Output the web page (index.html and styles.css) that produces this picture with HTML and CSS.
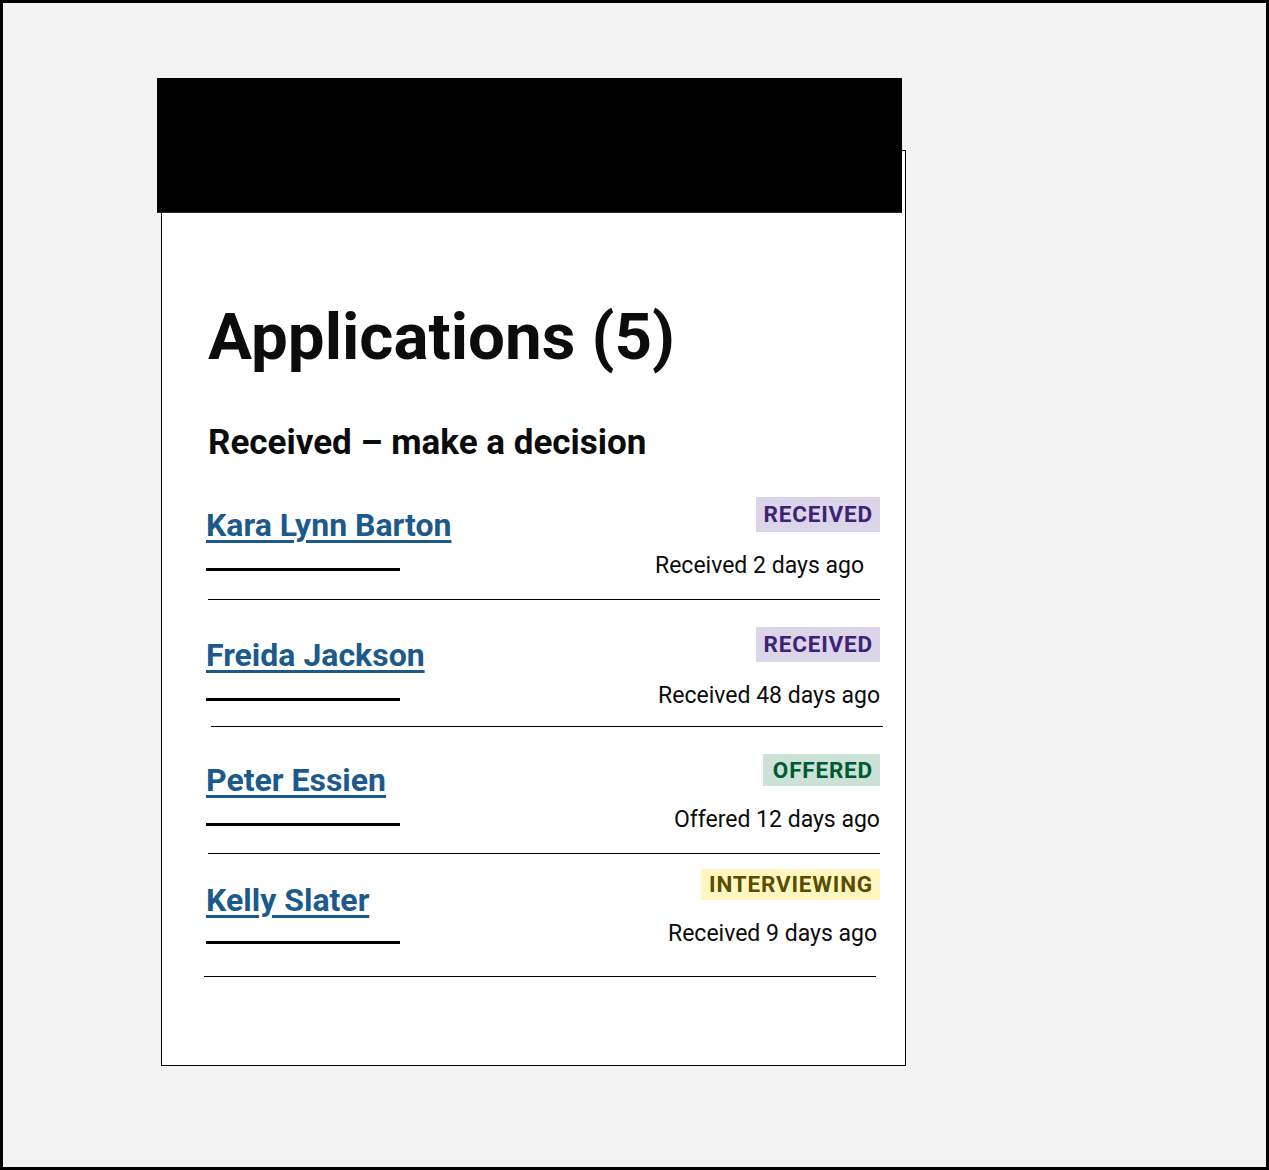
FILE: index.html
```html
<!DOCTYPE html>
<html lang="en">
<head>
<meta charset="utf-8">
<title>Applications</title>
<link rel="stylesheet" href="styles.css">
</head>
<body>
<div class="frame">
  <div class="masthead"></div>
  <main class="card">
    <h1 class="title">Applications (5)</h1>
    <h2 class="subtitle">Received – make a decision</h2>
    <ul class="apps">
      <li class="app app--1">
        <div class="app__row">
          <div class="app__main">
            <div class="app__title"><a class="app__name" href="#">Kara Lynn Barton</a></div>
            <div class="app__bar"></div>
          </div>
          <div class="app__meta">
            <strong class="tag tag--purple">Received</strong>
            <p class="app__date">Received 2 days ago</p>
          </div>
        </div>
        <div class="app__rule"></div>
      </li>
      <li class="app app--2">
        <div class="app__row">
          <div class="app__main">
            <div class="app__title"><a class="app__name" href="#">Freida Jackson</a></div>
            <div class="app__bar"></div>
          </div>
          <div class="app__meta">
            <strong class="tag tag--purple">Received</strong>
            <p class="app__date">Received 48 days ago</p>
          </div>
        </div>
        <div class="app__rule"></div>
      </li>
      <li class="app app--3">
        <div class="app__row">
          <div class="app__main">
            <div class="app__title"><a class="app__name" href="#">Peter Essien</a></div>
            <div class="app__bar"></div>
          </div>
          <div class="app__meta">
            <strong class="tag tag--green">Offered</strong>
            <p class="app__date">Offered 12 days ago</p>
          </div>
        </div>
        <div class="app__rule"></div>
      </li>
      <li class="app app--4">
        <div class="app__row">
          <div class="app__main">
            <div class="app__title"><a class="app__name" href="#">Kelly Slater</a></div>
            <div class="app__bar"></div>
          </div>
          <div class="app__meta">
            <strong class="tag tag--yellow">Interviewing</strong>
            <p class="app__date">Received 9 days ago</p>
          </div>
        </div>
        <div class="app__rule"></div>
      </li>
    </ul>
  </main>
</div>
</body>
</html>
```

FILE: styles.css
```css
html, body {
  margin: 0;
  padding: 0;
}

body {
  font-family: Roboto, "Noto Sans", "Liberation Sans", sans-serif;
  color: #0b0c0c;
}

.frame {
  box-sizing: border-box;
  width: 1269px;
  height: 1170px;
  border: 3px solid #000;
  background: #f3f3f3;
  padding: 75px 0 0 154px;
  overflow: hidden;
}

.masthead {
  position: relative;
  z-index: 1;
  width: 745px;
  height: 134px;
  background: #000;
  border-bottom: 1px solid #2e2e2e;
}

.card {
  display: block;
  box-sizing: border-box;
  width: 745px;
  margin: -63px 0 0 4px;
  background: #fff;
  border: 1px solid #000;
  padding: 150px 25px 88px 44px;
}

.title {
  margin: 0 0 0 2px;
  font-weight: 700;
  font-size: 65.5px;
  line-height: 72px;
}

.subtitle {
  margin: 50px 0 0 2px;
  font-weight: 700;
  font-size: 35px;
  line-height: 40px;
}

.apps {
  list-style: none;
  margin: 34px 0 0;
  padding: 0;
}

.app + .app {
  margin-top: 27px;
}

.app__row {
  display: flex;
  justify-content: space-between;
  align-items: flex-start;
}

.app__main {
  padding-top: 10px;
}

.app__title {
  font-size: 32px;
  line-height: 36px;
  font-weight: 700;
}

.app__name {
  color: #1d5a8c;
  text-decoration: underline;
  text-decoration-thickness: 3px;
  text-underline-offset: 4px;
}

.app__bar {
  width: 194px;
  height: 3px;
  background: #000;
  margin-top: 25px;
}

.app__meta {
  display: flex;
  flex-direction: column;
  align-items: flex-end;
}

.tag {
  display: block;
  font-weight: 700;
  font-size: 22.5px;
  line-height: 35px;
  letter-spacing: 0.8px;
  text-transform: uppercase;
  padding: 0 7px 0 8px;
}

.tag--purple {
  background: #dbd5e9;
  color: #3d2375;
}

.tag--green {
  background: #cce2d8;
  color: #005a30;
  padding-left: 10px;
}

.tag--yellow {
  background: #fff7bf;
  color: #594d00;
}

.app__date {
  margin: 19.5px 0 0;
  font-size: 23px;
  line-height: 28px;
}

.app__rule {
  width: 672px;
  height: 1px;
  background: #000;
  margin: 19.5px 0 0 2px;
}

.app--1 .app__date {
  margin-right: 16px;
}

.app--2 .app__rule {
  margin-top: 16.5px;
  margin-left: 5px;
}

.app--3 .app__main {
  padding-top: 8px;
}

.app--3 .tag {
  line-height: 32px;
}

.app--4 {
  margin-top: 15px !important;
}

.app--4 .app__main {
  padding-top: 13px;
}

.app--4 .app__bar {
  margin-top: 23px;
}

.app--4 .tag {
  line-height: 31px;
}

.app--4 .app__date {
  margin-right: 3px;
}

.app--4 .app__rule {
  margin-top: 28.5px;
  margin-left: -2px;
}
```
